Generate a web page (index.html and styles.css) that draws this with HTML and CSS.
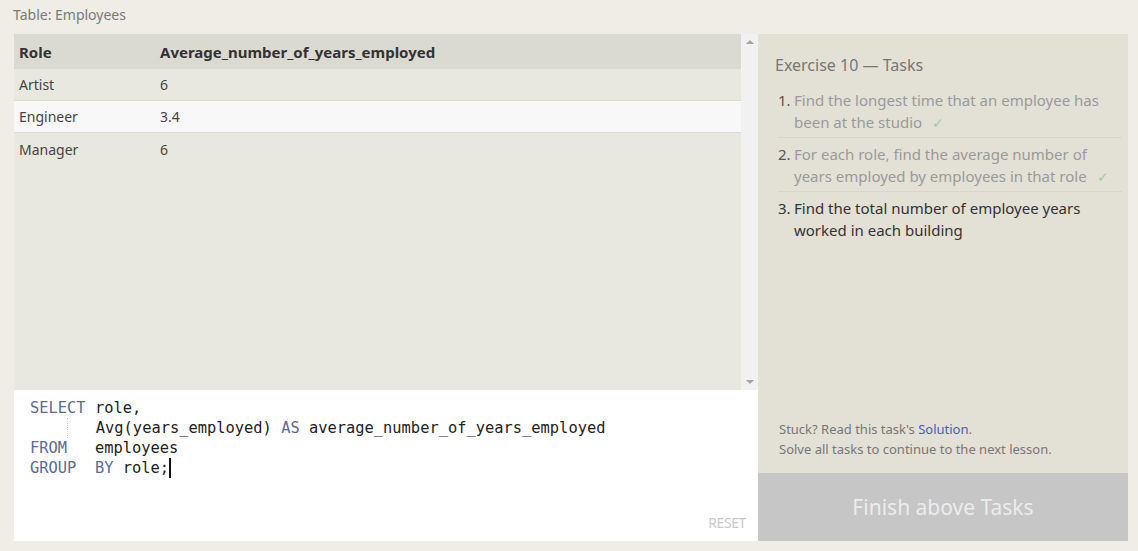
FILE: index.html
```html
<!DOCTYPE html>
<html>
<head>
<meta charset="utf-8">
<link rel="stylesheet" href="styles.css">
</head>
<body>
<div class="title">Table: Employees</div>
<div class="main">
  <div class="left">
    <div class="results">
      <div class="table-area">
        <table class="tbl">
          <thead><tr><th class="c1">Role</th><th>Average_number_of_years_employed</th></tr></thead>
          <tbody>
            <tr><td class="c1">Artist</td><td>6</td></tr>
            <tr class="alt"><td class="c1">Engineer</td><td>3.4</td></tr>
            <tr><td class="c1">Manager</td><td>6</td></tr>
          </tbody>
        </table>
      </div>
      <div class="scrollbar">
        <span class="arrow up"></span>
        <span class="arrow down"></span>
      </div>
    </div>
    <div class="editor">
<pre class="code"><span class="kw">SELECT</span> role,
<span class="guide">    </span>   Avg(years_employed) <span class="kw">AS</span> average_number_of_years_employed
<span class="kw">FROM</span>   employees
<span class="kw">GROUP</span>  <span class="kw">BY</span> role;<span class="cursor"></span></pre>
      <div class="reset">RESET</div>
    </div>
  </div>
  <div class="right">
    <div class="tasks">
      <div class="tasks-top">
        <h2 class="ex-title">Exercise 10 — Tasks</h2>
        <ol class="task-list">
          <li class="done"><span class="num">1.</span><p class="txt">Find the longest time that an employee has been at the studio <span class="check">✓</span></p></li>
          <li class="done"><span class="num">2.</span><p class="txt">For each role, find the average number of years employed by employees in that role <span class="check">✓</span></p></li>
          <li class="todo"><span class="num">3.</span><p class="txt">Find the total number of employee years worked in each building</p></li>
        </ol>
      </div>
      <div class="help">
        <div>Stuck? Read this task's <a class="link">Solution</a>.</div>
        <div>Solve all tasks to continue to the next lesson.</div>
      </div>
    </div>
    <div class="finish">Finish above Tasks</div>
  </div>
</div>
</body>
</html>
```

FILE: styles.css
```css
* { box-sizing: border-box; }
html, body { margin: 0; padding: 0; }
body {
  background: #efede6;
  font-family: "Noto Sans", "Open Sans", sans-serif;
  width: 1138px;
  height: 551px;
  overflow: hidden;
}
.title {
  height: 34px;
  padding: 5px 0 0 13px;
  font-size: 14px;
  color: #7a7a7a;
  line-height: 20px;
}
.main {
  display: flex;
  padding-left: 14px;
}
.left {
  width: 744px;
  display: flex;
  flex-direction: column;
}
.results {
  height: 356px;
  display: flex;
  background: #e9e8e0;
}
.table-area {
  flex: 1;
}
.tbl {
  width: 100%;
  border-collapse: separate;
  border-spacing: 0;
  table-layout: fixed;
  font-size: 14px;
  color: #333;
}
.tbl th {
  background: #dadad0;
  height: 35px;
  text-align: left;
  font-weight: bold;
  font-size: 15px;
  padding: 0 0 0 5px;
  color: #333;
}
.tbl td {
  height: 32px;
  padding: 0 0 0 5px;
  border-bottom: 1px solid #dcdbd3;
  color: #444;
}
.tbl tr:last-child td { border-bottom: none; }
.tbl tr.alt td { background: #f8f8f8; }
.tbl .c1 { width: 141px; }
.scrollbar {
  width: 17px;
  background: #f1f1f1;
  display: flex;
  flex-direction: column;
  justify-content: space-between;
  align-items: center;
  padding: 6px 0 6px;
}
.arrow {
  width: 0; height: 0;
  border-left: 4px solid transparent;
  border-right: 4px solid transparent;
}
.arrow.up { border-bottom: 4px solid #a3a3a3; }
.arrow.down { border-top: 4px solid #a3a3a3; }
.editor {
  height: 151px;
  background: #fff;
  position: relative;
  padding: 8px 0 0 16px;
}
.code {
  margin: 0;
  font-family: "DejaVu Sans Mono", "Liberation Mono", monospace;
  font-size: 15.4px;
  line-height: 20px;
  color: #222;
}
.kw { color: #5a6b95; }
.guide {
  border-left: 1px dotted #ccc;
  margin-left: 37px;
  display: inline-block;
  width: 0;
  height: 20px;
  vertical-align: top;
  overflow: hidden;
  color: transparent;
}
.cursor {
  display: inline-block;
  width: 2px;
  height: 20px;
  background: #111;
  vertical-align: top;
}
.reset {
  position: absolute;
  right: 12px;
  bottom: 9px;
  font-size: 14px;
  color: #c9c9c9;
  letter-spacing: -0.4px;
}
.right {
  width: 370px;
  display: flex;
  flex-direction: column;
  height: 507px;
}
.tasks {
  flex: 1;
  background: #e3e0d6;
  display: flex;
  flex-direction: column;
  justify-content: space-between;
  padding: 20px 6px 14px 17px;
}
.ex-title {
  margin: 0 0 8px;
  font-weight: normal;
  font-size: 16px;
  color: #777;
  line-height: 22px;
}
.task-list {
  list-style: none;
  margin: 0;
  padding: 0 0 0 3px;
  font-size: 15px;
  line-height: 22px;
}
.task-list li {
  display: flex;
  padding: 5px 0 4px;
  border-bottom: 1px solid #d8d5cb;
}
.task-list li:last-child { border-bottom: none; }
.num { width: 16px; flex: none; color: #555; }
.txt { flex: 1; margin: 0; }
.done .txt { color: #9a9a9a; }
.todo .txt { color: #333; }
.todo .num { color: #333; }
.check {
  color: #9ccc9c;
  margin-left: 6px;
  font-size: 14px;
  line-height: 10px;
}
.help {
  font-size: 13px;
  line-height: 20px;
  color: #777;
  padding-left: 4px;
}
.link { color: #3e5fc2; }
.finish {
  height: 68px;
  background: #c6c6c6;
  color: #ececec;
  font-size: 21px;
  display: flex;
  align-items: center;
  justify-content: center;
}
```
